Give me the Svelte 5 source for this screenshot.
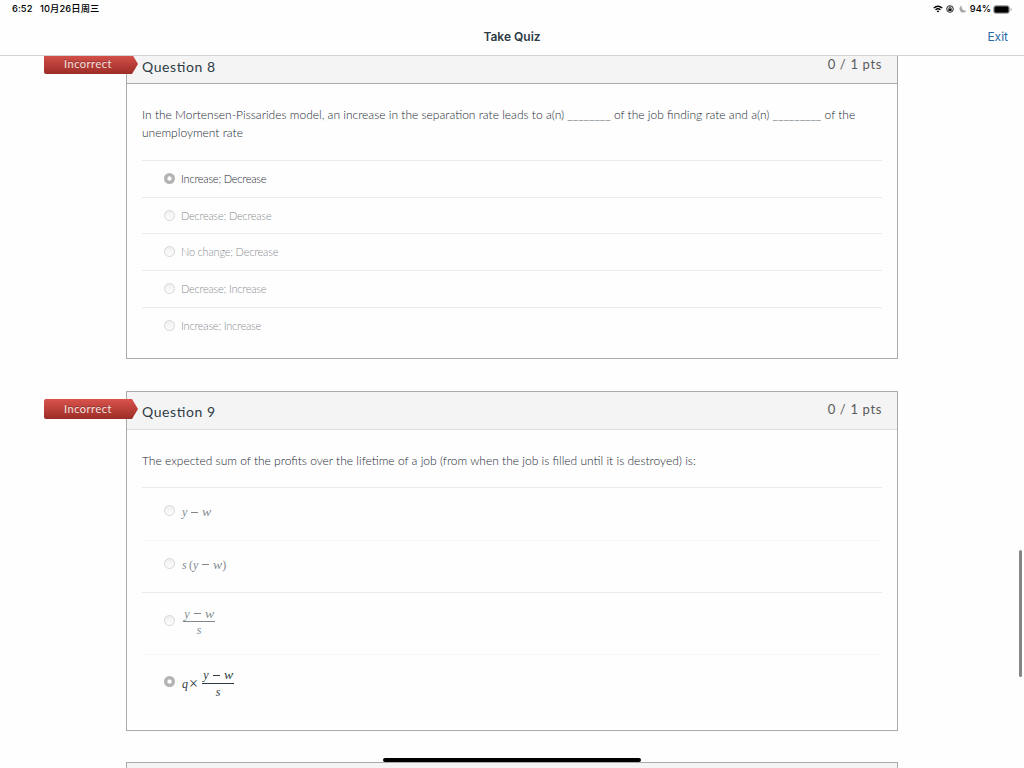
<script lang="ts">
    interface Question {
        id: number;
        points: string;
        height: number;
        prompt: string[];
        selected: number;
        answers?: string[];
    }

    const questions: Question[] = [
        {
            id: 8,
            points: '0 / 1 pts',
            height: 313,
            prompt: [
                'In the Mortensen-Pissarides model, an increase in the separation rate leads to a(n) ________ of the job finding rate and a(n) _________ of the',
                'unemployment rate'
            ],
            selected: 0,
            answers: [
                'Increase; Decrease',
                'Decrease; Decrease',
                'No change; Decrease',
                'Decrease; Increase',
                'Increase; Increase'
            ]
        },
        {
            id: 9,
            points: '0 / 1 pts',
            height: 340,
            prompt: ['The expected sum of the profits over the lifetime of a job (from when the job is filled until it is destroyed) is:'],
            selected: 3
        }
    ];
</script>

{#snippet difference()}
    <span class="var">y</span><span class="minus"></span><span class="var w">w</span>
{/snippet}

{#snippet fraction()}
    <span class="fraction">
        <span class="numerator">{@render difference()}</span>
        <span class="denominator">s</span>
    </span>
{/snippet}

<div class="screen">
    <div class="status">
        <span class="time">6:52</span>
        <span class="date">10月26日周三</span>
        <div class="indicators">
            <svg class="wifi" width="10" height="8" viewBox="0 0 10 8">
                <path d="M0.8 3 Q5 -0.6 9.2 3" fill="none" stroke="#000" stroke-width="1.4" />
                <path d="M2.5 4.8 Q5 2.6 7.5 4.8" fill="none" stroke="#000" stroke-width="1.3" />
                <path d="M3.6 6 Q5 4.9 6.4 6 L5 7.5 Z" />
            </svg>
            <svg class="lock" width="8" height="8" viewBox="0 0 8 8">
                <circle cx="4" cy="4" r="3.3" fill="none" stroke="#222" stroke-width="1" />
                <rect x="2.4" y="3.7" width="3.2" height="2.2" />
                <path d="M3 4V3a1 1 0 0 1 2 0v1" fill="none" stroke="#000" stroke-width=".7" />
            </svg>
            <svg class="moon" width="8" height="8" viewBox="0 0 8 8">
                <path d="M2.4 .5A3.8 3.8 0 1 0 7.5 5.8Q2.6 6 2.4 .5Z" fill="#a8a8a8" />
            </svg>
            <span class="percent">94%</span>
            <svg width="19" height="9" viewBox="0 0 19 9">
                <rect x=".5" y=".5" width="16" height="8" rx="2.4" fill="#fff" stroke="#a9a9a9" />
                <rect x="1.3" y="1.3" width="14.4" height="6.4" rx="1.5" />
                <path d="M17.7 3v3q1-.4 1-1.5T17.7 3Z" fill="#999" />
            </svg>
        </div>
    </div>

    <div class="navbar">
        <h1>Take Quiz</h1>
        <a href="#exit">Exit</a>
    </div>

    <main>
        {#each questions as question}
            <section class="question" style="height: {question.height}px">
                <div class="flag">Incorrect</div>
                <header class:strong={question.id === 8}>
                    <h2>Question {question.id}</h2>
                    <span class="points">{question.points}</span>
                </header>
                <div class="body">
                    <div class="prompt">
                        {#each question.prompt as line}
                            <p>{line}</p>
                        {/each}
                    </div>
                    {#if question.answers}
                        {#each question.answers as answer, i}
                            <div class="answer" class:selected={i === question.selected}>
                                <span class="radio"></span>
                                <span class="label">{answer}</span>
                            </div>
                        {/each}
                    {:else}
                        <div class="answer formula">
                            <span class="radio"></span>
                            <span class="math">{@render difference()}</span>
                        </div>
                        <div class="answer formula faint">
                            <span class="radio"></span>
                            <span class="math"><span class="var s">s</span><span class="paren">(</span>{@render difference()}<span class="paren">)</span></span>
                        </div>
                        <div class="answer formula tall">
                            <span class="radio"></span>
                            <span class="math">{@render fraction()}</span>
                        </div>
                        <div class="answer formula last faint selected">
                            <span class="radio"></span>
                            <span class="math"><span class="var">q</span><span class="times">×</span>{@render fraction()}</span>
                        </div>
                    {/if}
                </div>
            </section>
        {/each}
        <section class="question"><header></header></section>
    </main>

    <div class="scrollbar"></div>
    <div class="home-bar"></div>
</div>

<style>
    :global(body) {
        background: #fefefe;
    }
    .screen {
        position: relative;
        display: flex;
        flex-direction: column;
        width: 1024px;
        height: 768px;
        overflow: hidden;
        background: #fefefe;
        color: #2d3b45;
        font-family: Lato, "Liberation Sans", sans-serif;
    }
    .status {
        display: flex;
        align-items: center;
        height: 18px;
        padding: 0 12px;
        box-sizing: border-box;
        color: #000;
        font: 500 9.3px/18px Inter, "Noto Sans CJK SC", sans-serif;
    }
    .time {
        width: 28px;
        letter-spacing: 0.1px;
    }
    .date {
        letter-spacing: 0.1px;
    }
    .indicators {
        display: flex;
        align-items: center;
        margin-left: auto;
    }
    .wifi {
        margin-right: 3px;
    }
    .lock {
        margin-right: 5px;
    }
    .moon {
        margin-right: 3px;
    }
    .percent {
        margin-right: 2px;
    }
    .navbar {
        display: flex;
        align-items: center;
        justify-content: center;
        position: relative;
        height: 38px;
        box-sizing: border-box;
        border-bottom: 1px solid #d2d3d4;
    }
    h1 {
        margin: 0;
        font: 600 12px/18px Inter, sans-serif;
    }
    .navbar a {
        position: absolute;
        right: 16px;
        color: #2a6aa6;
        font: 400 12px/18px Inter, sans-serif;
        text-decoration: none;
    }
    main {
        flex: 1;
        min-height: 0;
        overflow: hidden;
        padding-left: 126px;
    }
    .question {
        position: relative;
        width: 772px;
        box-sizing: border-box;
        margin-bottom: 32px;
        border: 1px solid #aaa;
    }
    .question:first-child {
        margin-top: -10px;
    }
    .question:last-child {
        margin-top: -1px;
    }
    .question header {
        display: flex;
        justify-content: space-between;
        height: 38px;
        padding: 0 15px;
        box-sizing: border-box;
        border-bottom: 1px solid #ddd;
        background: #f4f4f4;
    }
    .question header.strong {
        height: 37px;
        border-color: #aaa;
    }
    h2 {
        margin: 0;
        font-size: 14px;
        font-weight: 400;
        line-height: 40px;
        letter-spacing: 0.6px;
        font-feature-settings: "liga" 1;
        white-space: nowrap;
    }
    .points {
        color: #595959;
        font-size: 13px;
        line-height: 34px;
        letter-spacing: 0.65px;
    }
    .flag {
        position: absolute;
        left: -83px;
        top: 7px;
        width: 94px;
        height: 20px;
        box-sizing: border-box;
        padding-right: 6px;
        border-radius: 2px 0 0 2px;
        background: linear-gradient(#d9534c, #9c2d27);
        clip-path: polygon(0 0, 88px 0, 100% 50%, 88px 100%, 0 100%);
        color: #f6e4e3;
        font-size: 11px;
        line-height: 20px;
        letter-spacing: 0.5px;
        text-align: center;
        text-shadow: 0 -1px 0 rgba(0, 0, 0, 0.3);
    }
    .body {
        padding: 22px 15px 0;
    }
    .prompt {
        padding-bottom: 18px;
        color: #1c2a34;
        font-size: 12px;
        font-weight: 300;
    }
    .question header:not(.strong) + .body .prompt {
        padding-bottom: 17px;
    }
    p {
        margin: 0;
        line-height: 18px;
        white-space: nowrap;
    }
    .answer {
        display: flex;
        height: 36.7px;
        box-sizing: border-box;
        padding-left: 22px;
        border-top: 1px solid #ebebeb;
    }
    .radio {
        flex: none;
        width: 11px;
        height: 11px;
        box-sizing: border-box;
        margin-top: 12px;
        border: 1px solid #d6d6d6;
        border-radius: 50%;
        background: linear-gradient(#f0f0f0, #fdfdfd);
    }
    .selected .radio {
        border: none;
        background: radial-gradient(circle, #fff 1.7px, #b3b3b3 2.5px);
    }
    .label {
        margin: 9px 0 0 6px;
        color: #1c2a34;
        font-size: 11px;
        font-weight: 300;
        line-height: 18px;
        letter-spacing: -0.21px;
        opacity: 0.55;
    }
    .selected .label {
        opacity: 1;
    }
    .formula {
        height: 52.5px;
    }
    .formula .radio {
        margin-top: 17px;
    }
    .formula.tall {
        height: 61.5px;
    }
    .formula.tall .radio {
        margin-top: 22px;
    }
    .formula.last {
        height: 70px;
    }
    .formula.last .radio {
        margin-top: 21.5px;
    }
    .faint {
        border-color: #f6f6f6;
    }
    .math {
        display: flex;
        align-items: center;
        height: 18px;
        margin: 15px 0 0 7px;
        color: #2d3b45;
        font-family: "Liberation Serif", serif;
        font-size: 12px;
        line-height: 18px;
        opacity: 0.6;
    }
    .selected .math {
        opacity: 1;
    }
    .tall .math {
        margin: 20px 0 0 8px;
    }
    .last .math {
        margin: 20px 0 0 7px;
    }
    .var,
    .denominator {
        font-style: italic;
    }
    .w {
        width: 9px;
        transform: scaleX(1.15);
        transform-origin: left;
    }
    .s {
        width: 7px;
    }
    .minus {
        display: inline-block;
        width: 7px;
        height: 1px;
        margin: 0 4px;
        background: currentColor;
    }
    .fraction {
        display: flex;
        flex-direction: column;
        align-items: center;
        width: 32px;
    }
    .numerator {
        display: flex;
        align-items: center;
        justify-content: center;
        width: 100%;
        height: 15px;
        border-bottom: 1px solid currentColor;
    }
    .denominator {
        height: 16px;
        line-height: 16px;
    }
    .times {
        margin: 0 4px 0 1px;
        font-size: 16px;
    }
    .scrollbar {
        position: absolute;
        right: 2px;
        top: 550px;
        width: 3px;
        height: 127px;
        border-radius: 2px;
        background: #858585;
    }
    .home-bar {
        position: absolute;
        left: 383px;
        bottom: 6px;
        width: 258px;
        height: 4px;
        border-radius: 2px;
        background: #000;
    }
</style>
